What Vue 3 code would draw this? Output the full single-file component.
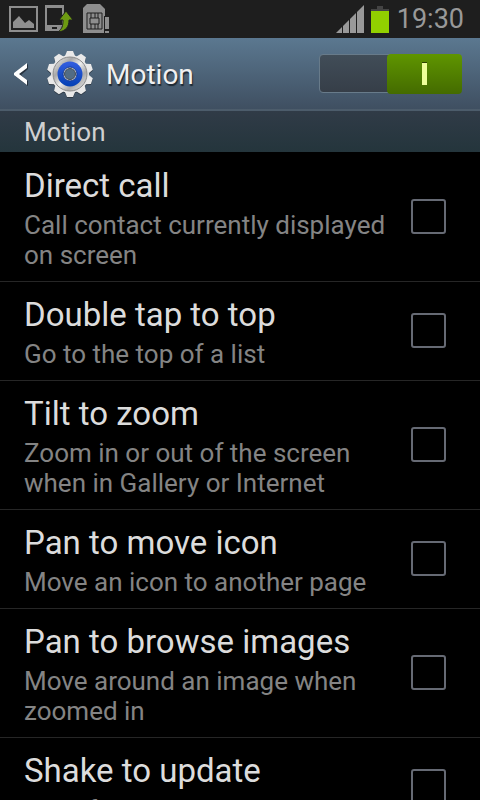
<script setup>
import { ref, reactive } from 'vue'

const enabled = ref(true)
const options = reactive([
  { id: 'direct-call', title: 'Direct call', summary: 'Call contact currently displayed on screen', checked: false },
  { id: 'double-tap', title: 'Double tap to top', summary: 'Go to the top of a list', checked: false },
  { id: 'tilt', title: 'Tilt to zoom', summary: 'Zoom in or out of the screen when in Gallery or Internet', checked: false },
  { id: 'pan-icon', title: 'Pan to move icon', summary: 'Move an icon to another page', checked: false },
  { id: 'pan-images', title: 'Pan to browse images', summary: 'Move around an image when zoomed in', checked: false },
  { id: 'shake', title: 'Shake to update', summary: 'Scan for devices', checked: false }
])
const teeth = Array.from({ length: 10 }, (_, i) => i * 36)
</script>

<template>
  <div class="screen">
    <div class="status">
      <div class="notices">
        <svg width="29" height="28" viewBox="0 0 29 28">
          <rect x="1" y="2" width="27" height="24" fill="none" stroke="#8e8e8e" stroke-width="2" />
          <path d="M4 23V17L10 11L16 18L20 15L25 19V23Z" fill="#8e8e8e" />
        </svg>
        <svg width="30" height="28" viewBox="0 0 30 28">
          <path fill-rule="evenodd" d="M0 0H19V26H0ZM2 3V20H17V3ZM7 22V24H12V22Z" fill="#8e8e8e" />
          <path d="M21 6L28 15H24C24 22 21 26 13 27C17 24 18 21 18 15H14Z" fill="#6d9a12" stroke="#1e1e1e" />
        </svg>
        <svg width="28" height="30" viewBox="-1 0 28 30">
          <path d="M0 4L4 0H17L22 5V29H0Z" fill="#8e8e8e" />
          <path d="M4 9H19V25H4ZM8 9V14M12 9V14M15 9V14M8 20V25M12 20V25M15 20V25M7 14H16V20H7Z" fill="none" stroke="#1e1e1e" />
          <path d="M21 12H27V29H21Z" fill="#1e1e1e" />
          <path d="M22 13H26V25H22ZM22 27H26V29H22Z" fill="#8e8e8e" />
        </svg>
      </div>
      <svg class="signal" width="28" height="28" viewBox="0 0 28 28">
        <path d="M0 28L28 0V28Z" fill="#999" />
        <path d="M6.500 19V28M13.500 12V28M20.500 5V28" stroke="#1e1e1e" />
      </svg>
      <svg class="battery" width="18" height="27" viewBox="0 0 18 27">
        <path d="M6 0H12V3H18V5H0V3H6Z" fill="#444" />
        <rect y="5" width="18" height="22" fill="#92d000" />
      </svg>
      <span class="clock">19:30</span>
    </div>

    <header class="bar">
      <button class="back" type="button" aria-label="Back">
        <svg width="18" height="26" viewBox="0 0 18 26">
          <path d="M15 3V8L8 14L15 20V25L2 15V13Z" fill="#26313d" />
          <path d="M14 2V7L6 13L14 19V24L1 14V12Z" fill="#fff" />
        </svg>
      </button>
      <svg class="gear" width="48" height="50" viewBox="-24 -25 48 50">
        <defs>
          <linearGradient id="metal" x1="0" y1="0" x2="1" y2="1">
            <stop offset="0" stop-color="#f8f8f8" />
            <stop offset="0.300" stop-color="#a8a8a8" />
            <stop offset="0.500" stop-color="#ededed" />
            <stop offset="0.700" stop-color="#aaa" />
            <stop offset="1" stop-color="#f4f4f4" />
          </linearGradient>
          <linearGradient id="blue" x1="0" y1="0" x2="0" y2="1">
            <stop offset="0" stop-color="#345ee0" />
            <stop offset="1" stop-color="#0340b4" />
          </linearGradient>
        </defs>
        <g fill="#2f3a46" transform="translate(0 1)">
          <circle r="19" />
          <path v-for="a in teeth" :key="a" d="M-5 -18L-3 -23H3L5 -18Z" :transform="`rotate(${a})`" />
        </g>
        <g fill="#e9e9e9">
          <circle r="19" />
          <path v-for="a in teeth" :key="a" d="M-5 -18L-3 -23H3L5 -18Z" :transform="`rotate(${a})`" />
        </g>
        <circle r="17" fill="url(#metal)" stroke="#8b8b8b" />
        <circle r="12.500" fill="url(#blue)" />
        <circle r="7" fill="#e6e6e6" stroke="#123a96" />
        <circle r="5.500" fill="#526c84" stroke="#454c55" />
      </svg>
      <h1 class="heading">Motion</h1>
      <label class="switch">
        <input v-model="enabled" type="checkbox" role="switch" aria-label="Motion" />
        <span class="thumb"><span class="mark"></span></span>
      </label>
    </header>

    <h2 class="section">Motion</h2>

    <ul class="list">
      <li v-for="o in options" :key="o.id">
        <label class="row" :for="o.id">
          <span class="text">
            <span class="title">{{ o.title }}</span>
            <span class="summary">{{ o.summary }}</span>
          </span>
          <input :id="o.id" v-model="o.checked" class="box" type="checkbox" />
        </label>
      </li>
    </ul>
  </div>
</template>

<style>
body { background: #000; overflow: hidden; }
</style>

<style scoped>
.screen {
  height: 100vh;
  overflow: hidden;
  background: #000;
  color: #dcdcdc;
  font-family: Roboto, "Liberation Sans", sans-serif;
}
.status {
  display: flex;
  align-items: center;
  height: 38px;
  padding: 0 16px 0 9px;
  background: #1e1e1e;
}
.notices { display: flex; flex: 1; gap: 7px; align-items: center; }
.signal { margin-right: 7px; }
.battery { margin-right: 8px; }
.clock { font-size: 27px; line-height: 38px; color: #999; }
.bar {
  display: flex;
  align-items: center;
  box-sizing: border-box;
  height: 73px;
  padding: 0 18px 0 13px;
  border-bottom: 2px solid #4c5c6b;
  background: linear-gradient(#5b7890, #3f4f61);
}
.back { display: flex; padding: 0; border: 0; background: none; }
.gear { margin: 0 12px 0 15px; }
.heading {
  flex: 1;
  margin: 0;
  padding-top: 2px;
  font-size: 28px;
  font-weight: 400;
  line-height: 36px;
  color: #f0f0f0;
  text-shadow: 1px 2px 1px #1e2832;
}
.switch {
  position: relative;
  display: flex;
  box-sizing: border-box;
  width: 143px;
  height: 39px;
  border: 1px solid #687b8a;
  border-radius: 4px;
  background: linear-gradient(#414d58, #363e48);
}
.switch input { position: absolute; inset: 0; margin: 0; opacity: 0; }
.thumb {
  display: flex;
  align-items: center;
  justify-content: center;
  width: 75px;
  height: 40px;
  margin: -1px;
  border-radius: 4px;
  background: #59636d;
}
.switch input:checked + .thumb { margin-left: auto; background: linear-gradient(#5f9500, #446b00); }
.mark { width: 5px; height: 22px; margin-top: -2px; border-top: 1px solid #2c4400; background: #efff99; }
.section {
  margin: 0 0 1px;
  padding: 1px 24px 0;
  font-size: 26px;
  font-weight: 400;
  line-height: 40px;
  color: #d0d0d0;
  background: linear-gradient(#303b47, #24353c);
}
.list { margin: 0; padding: 0; list-style: none; }
.row {
  display: flex;
  align-items: center;
  padding: 9px 34px 11px 24px;
  border-bottom: 1px solid #262626;
}
.text { flex: 1; }
.title, .summary { display: block; }
.title { font-size: 33px; line-height: 44px; padding: 2px 0; }
.summary { font-size: 26px; line-height: 30px; color: #848484; }
.box {
  appearance: none;
  box-sizing: border-box;
  flex: none;
  width: 35px;
  height: 35px;
  margin: 0 0 0 16px;
  border: 2px solid #666a74;
  border-radius: 3px;
}
.box:checked { background: #92d000; }
</style>
